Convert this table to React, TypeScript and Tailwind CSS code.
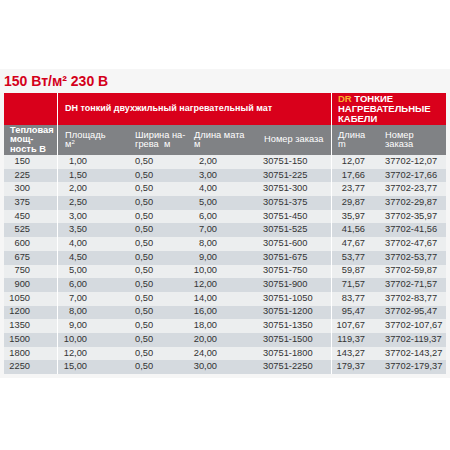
import React from "react";

const rows: [string, string, string, string, string, string, string][] = [
  ["150", "1,00", "0,50", "2,00", "30751-150", "12,07", "37702-12,07"],
  ["225", "1,50", "0,50", "3,00", "30751-225", "17,66", "37702-17,66"],
  ["300", "2,00", "0,50", "4,00", "30751-300", "23,77", "37702-23,77"],
  ["375", "2,50", "0,50", "5,00", "30751-375", "29,87", "37702-29,87"],
  ["450", "3,00", "0,50", "6,00", "30751-450", "35,97", "37702-35,97"],
  ["525", "3,50", "0,50", "7,00", "30751-525", "41,56", "37702-41,56"],
  ["600", "4,00", "0,50", "8,00", "30751-600", "47,67", "37702-47,67"],
  ["675", "4,50", "0,50", "9,00", "30751-675", "53,77", "37702-53,77"],
  ["750", "5,00", "0,50", "10,00", "30751-750", "59,87", "37702-59,87"],
  ["900", "6,00", "0,50", "12,00", "30751-900", "71,57", "37702-71,57"],
  ["1050", "7,00", "0,50", "14,00", "30751-1050", "83,77", "37702-83,77"],
  ["1200", "8,00", "0,50", "16,00", "30751-1200", "95,47", "37702-95,47"],
  ["1350", "9,00", "0,50", "18,00", "30751-1350", "107,67", "37702-107,67"],
  ["1500", "10,00", "0,50", "20,00", "30751-1500", "119,37", "37702-119,37"],
  ["1800", "12,00", "0,50", "24,00", "30751-1800", "143,27", "37702-143,27"],
  ["2250", "15,00", "0,50", "30,00", "30751-2250", "179,37", "37702-179,37"],
];

export default function App() {
  return (
    <div className="w-[450px] h-[450px] bg-white" style={{ fontFamily: '"Liberation Sans", Arial, sans-serif' }}>
      <div className="h-[69px]" />
      <div className="bg-[#f6f6f6] pt-[2px] pb-[4px]">
        <div className="h-[20px] pl-[4px] text-[14px] leading-[20px] font-bold text-[#d4001a]">
          150 Вт/м² 230 В
        </div>
        <div className="mt-[2px] ml-[4px] w-[442px]">
          {/* red header */}
          <div className="flex h-[32px] bg-[#d9001b] text-white">
            <div className="w-[54px] border-r border-white" />
            <div className="w-[274px] border-r border-white flex items-center pl-[7px] text-[9px] font-bold">
              DH тонкий двухжильный нагревательный мат
            </div>
            <div className="flex-1 pl-[6px] pt-[1px] text-[9.5px] leading-[9.8px] font-bold uppercase">
              <div><span className="text-[#f7b12d]">DR</span> Тонкие</div>
              <div>нагревательные</div>
              <div>кабели</div>
            </div>
          </div>
          {/* gray header */}
          <div className="flex h-[30px] bg-[#808285] text-white text-[9.3px] leading-[9.5px]">
            <div className="w-[54px] border-r border-white flex items-center pl-[6px] font-bold">
              <div>Тепловая<br />мощ-<br />ность В</div>
            </div>
            <div className="w-[70px] flex items-center pl-[7px]">
              <div>Площадь<br />м<sup className="text-[6px]">2</sup></div>
            </div>
            <div className="w-[60px] flex items-center pl-[7px]">
              <div>Ширина на-<br />грева &nbsp;м</div>
            </div>
            <div className="w-[68px] flex items-center pl-[6px]">
              <div>Длина мата<br />м</div>
            </div>
            <div className="w-[76px] border-r border-white flex items-center pl-[8px]">
              <div>Номер заказа</div>
            </div>
            <div className="w-[46px] flex items-center pl-[6px]">
              <div>Длина<br />m</div>
            </div>
            <div className="flex-1 flex items-center pl-[7px]">
              <div>Номер<br />заказа</div>
            </div>
          </div>
          {/* body */}
          <div className="text-[9.3px] text-[#333333]">
            {rows.map((r, i) => (
              <div
                key={i}
                className={`flex h-[13.7px] items-center ${i % 2 === 0 ? "bg-[#eceeef]" : "bg-[#d5dadf]"}`}
              >
                <div className="w-[54px] h-full border-r border-white flex items-center justify-end pr-[27px]">{r[0]}</div>
                <div className="w-[70px] text-right pr-[41px]">{r[1]}</div>
                <div className="w-[60px] pl-[7px]">{r[2]}</div>
                <div className="w-[68px] text-right pr-[39px]">{r[3]}</div>
                <div className="w-[76px] h-full border-r border-white flex items-center pl-[7px]">{r[4]}</div>
                <div className="w-[46px] text-right pr-[13px]">{r[5]}</div>
                <div className="flex-1 pl-[7px]">{r[6]}</div>
              </div>
            ))}
          </div>
        </div>
      </div>
    </div>
  );
}
